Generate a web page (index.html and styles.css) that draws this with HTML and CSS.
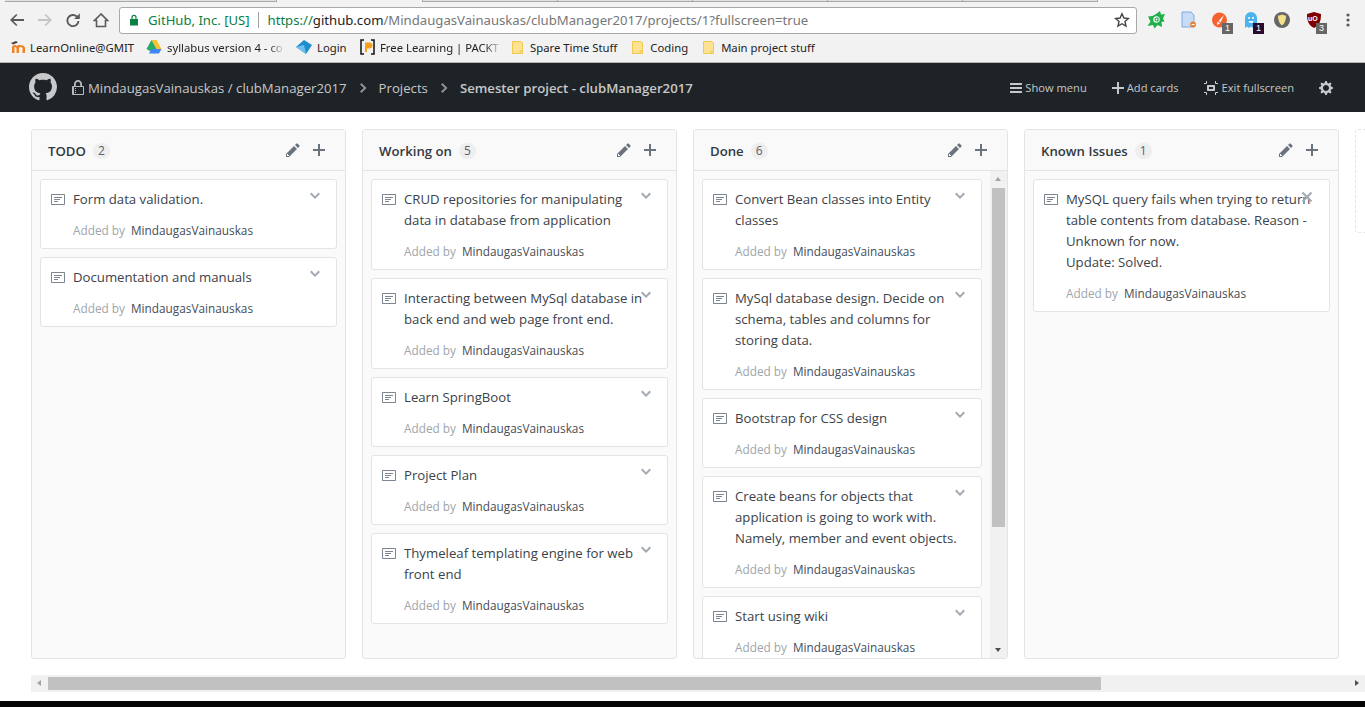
FILE: index.html
```html
<!DOCTYPE html>
<html lang="en">
<head>
  <meta charset="UTF-8" />
  <title>clubManager2017 project board</title>
  <link rel="stylesheet" href="styles.css">
</head>
<body>
  <svg class="defs" width="0" height="0">
    <symbol id="i-note" viewBox="0 0 14 16"><path d="M3 10h4V9H3v1zm0-2h6V7H3v1zm0-2h8V5H3v1zm10 6H1V3h12v9zM1 2c-.55 0-1 .45-1 1v9c0 .55.45 1 1 1h12c.55 0 1-.45 1-1V3c0-.55-.45-1-1-1H1z"/></symbol>
    <symbol id="i-chevron" viewBox="0 0 10 16"><path d="M5 11L0 6l1.5-1.5L5 8.25 8.5 4.5 10 6l-5 5z"/></symbol>
    <symbol id="i-pencil" viewBox="0 0 14 16"><path d="M0 12v3h3l8-8-3-3-8 8zm3 2H1v-2h1v1h1v1zm10.3-9.3L12 6 9 3l1.3-1.3a.996.996 0 0 1 1.41 0l1.59 1.59c.39.39.39 1.02 0 1.41z"/></symbol>
    <symbol id="i-plus" viewBox="0 0 12 16"><path d="M12 9H7v5H5V9H0V7h5V2h2v5h5v2z"/></symbol>
    <symbol id="i-right" viewBox="0 0 8 16"><path d="M7.5 8l-5 5L1 11.5 4.75 8 1 4.5 2.5 3l5 5z"/></symbol>
    <symbol id="i-folder" viewBox="0 0 11 13"><path d="M.5.5h8.500l1.500 1.500v10.500H.5z" fill="#fde293" stroke="#f0c94f"/><path d="M8 10h2.500v2.500H8z" fill="#fde293" stroke="#f0c94f"/></symbol>
  </svg>

  <div class="tabstrip">
    <span class="tab tab-first"></span>
    <span class="tab tab-active"></span>
    <span class="tab"></span>
    <span class="tab"></span>
    <span class="tab"></span>
    <span class="tab"></span>
    <span class="tab"></span>
  </div>

  <div class="toolbar">
    <svg class="nav-icon" viewBox="0 0 16 16"><path d="M15 7.100H4.400l4-4L7.200 1.900 1 8l6.200 6.100 1.200-1.200-4-4H15z" fill="#5a5a5a"/></svg>
    <svg class="nav-icon" viewBox="0 0 16 16"><path d="M1 7.100h10.600l-4-4 1.200-1.200L15 8l-6.200 6.100-1.200-1.200 4-4H1z" fill="#c4c4c4"/></svg>
    <svg class="nav-icon" viewBox="0 0 16 16"><path d="M13.500 9a5.600 5.600 0 1 1-1.700-4.500" fill="none" stroke="#5a5a5a" stroke-width="1.900"/><path d="M14.800 1.300v5.700H9.100z" fill="#5a5a5a"/></svg>
    <svg class="nav-icon" viewBox="0 0 16 16"><path d="M8 2L1.500 8.500h2v6h9v-6h2z" fill="none" stroke="#5a5a5a" stroke-width="1.600"/></svg>
    <div class="omnibox">
      <svg class="padlock" viewBox="0 0 10 12"><path d="M2.400 5V3.400a2.600 2.600 0 0 1 5.200 0V5H9v6.500H1V5zM3.600 5h2.800V3.400a1.400 1.400 0 0 0-2.800 0z" fill="#0b8043"/></svg>
      <span class="site">GitHub, Inc. [US]</span>
      <span class="omni-sep"></span>
      <span class="url"><span class="scheme">https://</span><span class="host">github.com</span>/MindaugasVainauskas/clubManager2017/projects/1?fullscreen=true</span>
      <svg class="star" viewBox="0 0 16 16"><path d="M8 1.800l1.900 4.200 4.500.5-3.400 3 1 4.500L8 11.700 4 14l1-4.500-3.400-3 4.500-.5z" fill="none" stroke="#444" stroke-width="1.400"/></svg>
    </div>
    <div class="extensions">
      <span class="ext ext-avast"><svg viewBox="0 0 18 18"><path d="M9 3l4-3 1 3.500 4-.5-2 4.500 1.500 3-3 .5.5 5-4.500-2-3 3.500-1.500-3.500-5.500 1 3-4.500L1 5.500l4.500-.5z" fill="#1fb04c"/><circle cx="9.500" cy="8.500" r="3.200" fill="#fff"/><path d="M8 8.500a1.500 1.500 0 0 1 3 0 1.500 1.500 0 0 1-3 0zM11 6.500v4" fill="none" stroke="#1fb04c" stroke-width="1.100"/></svg></span>
      <span class="ext ext-doc"><svg viewBox="0 0 18 18"><path d="M2 1h9l3 3v12H2z" fill="#c6dcf7" stroke="#7eaae0"/><circle cx="13" cy="13.500" r="3" fill="#e8853a"/><path d="M11.500 13h3v1h-3z" fill="#fff"/></svg></span>
      <span class="ext ext-brush"><svg viewBox="0 0 18 18"><circle cx="8.500" cy="9" r="7.500" fill="#f4622f"/><path d="M13 4L7.500 10l2 1.500z" fill="#fff"/><path d="M6.500 10.500l2.500 2-3 1.500z" fill="#fff"/></svg><b class="badge">1</b></span>
      <span class="ext ext-ghost"><svg viewBox="0 0 18 18"><path d="M3 17V7a6 6 0 0 1 12 0v10l-2-1.500-2 1.500-2-1.500-2 1.500-2-1.500z" fill="#4db3ec"/><circle cx="7" cy="7" r="1" fill="#fff"/><circle cx="11" cy="7" r="1" fill="#fff"/><path d="M6.500 10h5a2.500 2 0 0 1-5 0z" fill="#fff"/></svg><b class="badge badge-dark">1</b></span>
      <span class="ext ext-shield"><svg viewBox="0 0 18 18"><circle cx="9" cy="9" r="8" fill="#666"/><path d="M9 3.500c2 1 3 1 4 1 0 4-1 8-4 10-3-2-4-6-4-10 1 0 2 0 4-1z" fill="#f4e08a"/></svg></span>
      <span class="ext ext-ublock"><svg viewBox="0 0 18 18"><path d="M9 1l7 2c0 6-1 11-7 14C3 14 2 9 2 3z" fill="#800000"/></svg><i class="ub">uO</i><b class="badge">3</b></span>
      <svg class="kebab" viewBox="0 0 4 16"><circle cx="2" cy="3" r="1.600"/><circle cx="2" cy="8" r="1.600"/><circle cx="2" cy="13" r="1.600"/></svg>
    </div>
  </div>

  <div class="bookmarks">
    <a class="mark mark-moodle"><svg viewBox="0 0 16 14"><path d="M1 3l5-2 2 1.500-5 2z" fill="#444"/><path d="M2 13V7.500c0-1.500 1-2.500 2.500-2.500 1 0 1.700.4 2.200 1 .5-.6 1.300-1 2.300-1C13 5 15 6 15 8v5h-2.500V8.500c0-1-.8-1.500-2.500-1.500-.7 0-1 .5-1 1.500V13H6.500V8.500C6.500 7.500 5.500 7 4.800 7s-.3.500-.3 1.500V13z" fill="#f58220"/></svg>LearnOnline@GMIT</a>
    <a class="mark mark-drive"><svg viewBox="0 0 16 14"><path d="M5.500 0h5l5 9h-5z" fill="#fbc02d"/><path d="M5.500 0l5 9-2.500 4.500L.5 9z" fill="#1da462" opacity=".95"/><path d="M3 13.500L5.500 9h10L13 13.500z" fill="#4285f4"/></svg><span class="fade">syllabus version 4 - co</span></a>
    <a class="mark mark-login"><svg viewBox="0 0 16 14"><path d="M8 0l8 5-6 9-10-7z" fill="#1d8fd1"/><path d="M0 7l8-2 2 9z" fill="#6ec1ec"/></svg>Login</a>
    <a class="mark mark-packt"><svg viewBox="0 0 15 16"><path d="M4 1H1v14h3M11 1h3v14h-3" fill="none" stroke="#111" stroke-width="1.500"/><path d="M5 3.500h4.500a2.500 2.500 0 0 1 0 6H7V13H5z" fill="#f5a21b"/></svg><span class="fade">Free Learning | PACKT</span></a>
    <a class="mark mark-folder"><svg><use href="#i-folder"/></svg>Spare Time Stuff</a>
    <a class="mark mark-folder"><svg><use href="#i-folder"/></svg>Coding</a>
    <a class="mark mark-folder"><svg><use href="#i-folder"/></svg>Main project stuff</a>
  </div>

  <header class="gh-bar">
    <svg class="gh-logo" viewBox="0 0 16 16"><path d="M8 0C3.580 0 0 3.580 0 8c0 3.540 2.290 6.530 5.470 7.590.4.070.55-.17.55-.38 0-.19-.01-.82-.01-1.490-2.010.37-2.530-.49-2.690-.94-.09-.23-.48-.94-.82-1.130-.28-.15-.68-.52-.01-.53.63-.01 1.080.58 1.230.82.720 1.210 1.870.87 2.330.66.070-.52.28-.87.51-1.070-1.780-.2-3.640-.89-3.640-3.950 0-.87.31-1.590.82-2.150-.08-.2-.36-1.020.08-2.120 0 0 .67-.21 2.200.82.64-.18 1.320-.27 2-.27.68 0 1.360.09 2 .27 1.530-1.040 2.200-.82 2.200-.82.44 1.100.16 1.920.08 2.120.51.56.82 1.270.82 2.150 0 3.070-1.870 3.750-3.650 3.950.29.25.54.73.54 1.480 0 1.070-.01 1.930-.01 2.200 0 .21.15.46.55.38A8.013 8.013 0 0 0 16 8c0-4.420-3.580-8-8-8z"/></svg>
    <svg class="gh-lock" viewBox="0 0 12 16"><path d="M4 13H3v-1h1v1zm8-6v7c0 .55-.45 1-1 1H1c-.55 0-1-.45-1-1V7c0-.55.45-1 1-1h1V4c0-2.200 1.800-4 4-4s4 1.800 4 4v2h1c.55 0 1 .45 1 1zM3.800 6h4.410V4c0-1.220-.98-2.200-2.200-2.200-1.220 0-2.200.98-2.200 2.200v2H3.800zM11 7H2v7h9V7zM4 8H3v1h1V8zm0 2H3v1h1v-1z"/></svg>
    <span class="crumb crumb-repo">MindaugasVainauskas / clubManager2017</span>
    <svg class="crumb-sep"><use href="#i-right"/></svg>
    <span class="crumb crumb-projects">Projects</span>
    <svg class="crumb-sep"><use href="#i-right"/></svg>
    <strong class="crumb crumb-current">Semester project - clubManager2017</strong>
    <nav class="gh-actions">
      <a class="gh-action action-menu"><svg viewBox="0 0 12 16"><path d="M11.410 9H.59C0 9 0 8.590 0 8c0-.59 0-1 .59-1H11.400c.59 0 .59.41.59 1 0 .59 0 1-.59 1h.01zm0-4H.59C0 5 0 4.590 0 4c0-.59 0-1 .59-1H11.400c.59 0 .59.41.59 1 0 .59 0 1-.59 1h.01zM.59 11H11.400c.59 0 .59.41.59 1 0 .59 0 1-.59 1H.59C0 13 0 12.590 0 12c0-.59 0-1 .59-1z"/></svg>Show menu</a>
      <a class="gh-action action-add"><svg viewBox="0 0 12 16"><use href="#i-plus"/></svg>Add cards</a>
      <a class="gh-action action-exit"><svg viewBox="0 0 14 16"><path d="M2 4H0V3h2V1h1v2c0 .547-.453 1-1 1zm0 8H0v1h2v2h1v-2c0-.547-.453-1-1-1zm9-2c0 .547-.453 1-1 1H4c-.547 0-1-.453-1-1V6c0-.547.453-1 1-1h6c.547 0 1 .453 1 1v4zM9 7H5v2h4V7zm2 6v2h1v-2h2v-1h-2c-.547 0-1 .453-1 1zm1-9V1h-1v2c0 .547.453 1 1 1h2V3h-2z"/></svg>Exit fullscreen</a>
      <svg class="gh-gear" viewBox="0 0 14 16"><path d="M14 8.770v-1.600l-1.940-.64-.45-1.090.88-1.840-1.130-1.130-1.810.91-1.090-.45-.69-1.920h-1.600l-.63 1.940-1.110.45-1.840-.88-1.130 1.130.91 1.810-.45 1.090L0 7.230v1.590l1.940.64.45 1.090-.88 1.840 1.130 1.130 1.810-.91 1.090.45.69 1.920h1.590l.63-1.940 1.110-.45 1.840.88 1.130-1.130-.92-1.810.47-1.090L14 8.750v.02zM7 11c-1.660 0-3-1.340-3-3s1.340-3 3-3 3 1.340 3 3-1.340 3-3 3z"/></svg>
    </nav>
  </header>

  <main class="board">
    <section class="column">
      <div class="column-head">
        <span class="column-name">TODO</span><span class="counter">2</span>
        <svg class="head-pencil"><use href="#i-pencil"/></svg><svg class="head-plus"><use href="#i-plus"/></svg>
      </div>
      <div class="cards">
        <article class="card"><svg class="card-note"><use href="#i-note"/></svg><svg class="card-toggle"><use href="#i-chevron"/></svg>
          <p class="card-title">Form data validation.</p><p class="card-by">Added by <span>MindaugasVainauskas</span></p></article>
        <article class="card"><svg class="card-note"><use href="#i-note"/></svg><svg class="card-toggle"><use href="#i-chevron"/></svg>
          <p class="card-title">Documentation and manuals</p><p class="card-by">Added by <span>MindaugasVainauskas</span></p></article>
      </div>
    </section>

    <section class="column">
      <div class="column-head">
        <span class="column-name">Working on</span><span class="counter">5</span>
        <svg class="head-pencil"><use href="#i-pencil"/></svg><svg class="head-plus"><use href="#i-plus"/></svg>
      </div>
      <div class="cards">
        <article class="card"><svg class="card-note"><use href="#i-note"/></svg><svg class="card-toggle"><use href="#i-chevron"/></svg>
          <p class="card-title">CRUD repositories for manipulating<br>data in database from application</p><p class="card-by">Added by <span>MindaugasVainauskas</span></p></article>
        <article class="card"><svg class="card-note"><use href="#i-note"/></svg><svg class="card-toggle"><use href="#i-chevron"/></svg>
          <p class="card-title">Interacting between MySql database in<br>back end and web page front end.</p><p class="card-by">Added by <span>MindaugasVainauskas</span></p></article>
        <article class="card"><svg class="card-note"><use href="#i-note"/></svg><svg class="card-toggle"><use href="#i-chevron"/></svg>
          <p class="card-title">Learn SpringBoot</p><p class="card-by">Added by <span>MindaugasVainauskas</span></p></article>
        <article class="card"><svg class="card-note"><use href="#i-note"/></svg><svg class="card-toggle"><use href="#i-chevron"/></svg>
          <p class="card-title">Project Plan</p><p class="card-by">Added by <span>MindaugasVainauskas</span></p></article>
        <article class="card"><svg class="card-note"><use href="#i-note"/></svg><svg class="card-toggle"><use href="#i-chevron"/></svg>
          <p class="card-title">Thymeleaf templating engine for web<br>front end</p><p class="card-by">Added by <span>MindaugasVainauskas</span></p></article>
      </div>
    </section>

    <section class="column">
      <div class="column-head">
        <span class="column-name">Done</span><span class="counter">6</span>
        <svg class="head-pencil"><use href="#i-pencil"/></svg><svg class="head-plus"><use href="#i-plus"/></svg>
      </div>
      <div class="cards-scroll">
        <div class="cards">
          <article class="card"><svg class="card-note"><use href="#i-note"/></svg><svg class="card-toggle"><use href="#i-chevron"/></svg>
            <p class="card-title">Convert Bean classes into Entity<br>classes</p><p class="card-by">Added by <span>MindaugasVainauskas</span></p></article>
          <article class="card"><svg class="card-note"><use href="#i-note"/></svg><svg class="card-toggle"><use href="#i-chevron"/></svg>
            <p class="card-title">MySql database design. Decide on<br>schema, tables and columns for<br>storing data.</p><p class="card-by">Added by <span>MindaugasVainauskas</span></p></article>
          <article class="card"><svg class="card-note"><use href="#i-note"/></svg><svg class="card-toggle"><use href="#i-chevron"/></svg>
            <p class="card-title">Bootstrap for CSS design</p><p class="card-by">Added by <span>MindaugasVainauskas</span></p></article>
          <article class="card"><svg class="card-note"><use href="#i-note"/></svg><svg class="card-toggle"><use href="#i-chevron"/></svg>
            <p class="card-title">Create beans for objects that<br>application is going to work with.<br>Namely, member and event objects.</p><p class="card-by">Added by <span>MindaugasVainauskas</span></p></article>
          <article class="card"><svg class="card-note"><use href="#i-note"/></svg><svg class="card-toggle"><use href="#i-chevron"/></svg>
            <p class="card-title">Start using wiki</p><p class="card-by">Added by <span>MindaugasVainauskas</span></p></article>
        </div>
        <div class="vscroll">
          <span class="arrow-up"></span>
          <span class="vthumb"></span>
          <span class="arrow-down"></span>
        </div>
      </div>
    </section>

    <section class="column">
      <div class="column-head">
        <span class="column-name">Known Issues</span><span class="counter">1</span>
        <svg class="head-pencil"><use href="#i-pencil"/></svg><svg class="head-plus"><use href="#i-plus"/></svg>
      </div>
      <div class="cards">
        <article class="card"><svg class="card-note"><use href="#i-note"/></svg>
          <svg class="card-close" viewBox="0 0 12 16"><path d="M7.480 8l3.750 3.750-1.480 1.480L6 9.480l-3.750 3.750-1.480-1.480L4.520 8 .77 4.250l1.480-1.480L6 6.520l3.750-3.750 1.480 1.480L7.480 8z"/></svg>
          <p class="card-title">MySQL query fails when trying to return<br>table contents from database. Reason -<br>Unknown for now.<br>Update: Solved.</p><p class="card-by">Added by <span>MindaugasVainauskas</span></p></article>
      </div>
    </section>

    <div class="ghost-column"></div>
  </main>

  <div class="hscroll">
    <span class="arrow-left"></span>
    <span class="hthumb"></span>
    <span class="arrow-right"></span>
  </div>
  <div class="desktop"></div>
</body>
</html>
```

FILE: styles.css
```css
* {
  box-sizing: border-box;
}

html, body {
  margin: 0;
  height: 707px;
  overflow: hidden;
}

body {
  display: flex;
  flex-direction: column;
  background: #fff;
  font-family: "Open Sans", "Liberation Sans", sans-serif;
  font-size: 13px;
  color: #24292e;
}

.defs {
  position: absolute;
}

/* browser chrome */
.tabstrip {
  height: 6px;
  background: #f2f2f2;
  flex: none;
  display: flex;
  padding-left: 5px;
}

.tab {
  width: 135px;
  height: 2px;
  background: #e2e2e2;
  border-bottom: 1px solid #a8a8a8;
  border-right: 1px solid #a8a8a8;
}

.tab-first {
  width: 272px;
}

.tab-active {
  width: 146px;
  background: #f2f2f2;
  border-bottom: 0;
}

.toolbar {
  height: 28px;
  flex: none;
  display: flex;
  align-items: center;
  background: #f2f2f2;
  padding-left: 9px;
}

.nav-icon {
  width: 16px;
  height: 16px;
  margin-right: 12px;
  flex: none;
}

.omnibox {
  width: 1018px;
  height: 27px;
  margin-left: -2px;
  flex: none;
  display: flex;
  align-items: center;
  background: #fff;
  border: 1px solid #a9a9a9;
  border-radius: 3px;
  font-family: "Noto Sans", sans-serif;
  font-size: 13.1px;
  padding-left: 9px;
}

.padlock {
  width: 10px;
  height: 12px;
  margin-right: 9px;
}

.site {
  color: #0b8043;
}

.omni-sep {
  width: 1px;
  height: 16px;
  background: #a0a0a0;
  margin: 0 9px 0 8px;
}

.url {
  color: #777;
  font-size: 13.15px;
}

.scheme {
  color: #0b8043;
}

.host {
  color: #222;
}

.star {
  width: 16px;
  height: 16px;
  margin-left: auto;
  margin-right: 6px;
}

.extensions {
  display: flex;
  align-items: center;
  flex: 1;
  height: 26px;
}

.ext {
  position: relative;
  width: 18px;
  height: 18px;
  flex: none;
}

.ext svg {
  display: block;
  width: 18px;
  height: 18px;
}

.ext-avast { margin-left: 10px; }
.ext-doc { margin-left: 15px; }
.ext-brush { margin-left: 13px; }
.ext-ghost { margin-left: 13px; }
.ext-shield { margin-left: 13px; }
.ext-ublock { margin-left: 14px; }

.badge {
  position: absolute;
  left: 11px;
  top: 12px;
  width: 11px;
  height: 11px;
  background: #666;
  color: #fff;
  font: 9px/11px "Liberation Sans", sans-serif;
  text-align: center;
}

.badge-dark {
  background: #2a0a2e;
}

.ub {
  position: absolute;
  left: 3px;
  top: 3px;
  font: bold 7px/9px "Liberation Sans", sans-serif;
  color: #fff;
}

.kebab {
  width: 4px;
  height: 16px;
  margin-left: 23px;
  fill: #5a5a5a;
}

.bookmarks {
  height: 29px;
  flex: none;
  display: flex;
  align-items: center;
  background: #f2f2f2;
  font-family: "Noto Sans", sans-serif;
  font-size: 11.3px;
  color: #222;
  padding: 0 0 2px 10px;
  border-bottom: 1px solid #b5b5b5;
}

.mark {
  display: flex;
  align-items: center;
  white-space: nowrap;
  flex: none;
}

.mark svg {
  width: 16px;
  height: 14px;
  margin-right: 4px;
  flex: none;
}

.fade {
  display: block;
  -webkit-mask-image: linear-gradient(to right, #000 88%, rgba(0, 0, 0, 0.15));
  mask-image: linear-gradient(to right, #000 88%, rgba(0, 0, 0, 0.15));
}

.mark-moodle { width: 136px; }
.mark-drive { width: 150px; }
.mark-drive svg { margin-right: 5px; }
.mark-login { width: 64px; }
.mark-login svg { margin-right: 5px; }
.mark-packt { width: 152px; }
.mark-packt svg { width: 15px; height: 16px; margin-right: 5px; }
.mark-folder { margin-right: 15px; }
.mark-folder svg { width: 11px; height: 13px; margin-right: 7px; }

/* project header */
.gh-bar {
  height: 49px;
  flex: none;
  display: flex;
  align-items: center;
  background: #1e2327;
  color: rgba(255, 255, 255, 0.75);
  font-size: 13.2px;
  padding: 1px 0 0 29px;
}

.gh-logo {
  width: 28px;
  height: 28px;
  fill: #c8c9ca;
  margin: 0 15px 3px 0;
  flex: none;
}

.gh-lock {
  width: 12px;
  height: 16px;
  fill: #b9babb;
  margin-right: 4px;
  flex: none;
}

.crumb {
  white-space: nowrap;
}

.crumb-sep {
  width: 8px;
  height: 16px;
  fill: #8f9193;
  margin: 0 12px;
  flex: none;
}

.crumb-current {
  font-weight: 600;
}

.gh-actions {
  margin: 0 0 1px auto;
  display: flex;
  align-items: center;
  font-size: 11.15px;
  padding-right: 32px;
}

.gh-action {
  display: flex;
  align-items: center;
  white-space: nowrap;
  margin-right: 25px;
}

.gh-action svg {
  width: 12px;
  height: 16px;
  fill: #c8c9ca;
  margin-right: 3px;
}

.action-exit svg {
  width: 14px;
  margin-right: 4px;
}

.gh-gear {
  width: 14px;
  height: 16px;
  fill: #c8c9ca;
}

/* board */
.board {
  flex: 1;
  min-height: 0;
  display: flex;
  gap: 16px;
  padding: 17px 0 16px 31px;
  overflow: hidden;
}

.column {
  width: 315px;
  flex: none;
  display: flex;
  flex-direction: column;
  background: #fafafa;
  border: 1px solid #e4e4e4;
  border-radius: 3px;
  overflow: hidden;
}

.column-head {
  height: 41px;
  flex: none;
  display: flex;
  align-items: center;
  background: #f9f9f9;
  border-bottom: 1px solid #e4e4e4;
  padding: 0 20px 0 16px;
}

.column-name {
  font-size: 13.2px;
  font-weight: 600;
  color: #33393f;
  margin-top: 2px;
}

.counter {
  min-width: 16px;
  height: 16px;
  margin: 2px 0 0 7px;
  padding: 0 5px;
  border-radius: 8px;
  background: #eeeeee;
  color: #586069;
  font-size: 12px;
  line-height: 16px;
  text-align: center;
}

.head-pencil {
  width: 14px;
  height: 16px;
  fill: #6a737d;
  margin-left: auto;
  margin-right: 13px;
}

.head-plus {
  width: 12px;
  height: 16px;
  fill: #6a737d;
}

.cards {
  flex: 1;
  min-width: 0;
  display: flex;
  flex-direction: column;
  gap: 8px;
  padding: 8px;
}

.cards-scroll {
  flex: 1;
  min-height: 0;
  display: flex;
  overflow: hidden;
}

.card {
  position: relative;
  flex: none;
  background: #fff;
  border: 1px solid #e4e4e4;
  border-radius: 3px;
  padding: 9px 10px 7px 32px;
}

.card p {
  margin: 0;
  line-height: 21px;
  white-space: nowrap;
}

.card-title {
  color: #3b4249;
  font-size: 13.2px;
}

.card p.card-by {
  margin-top: 10px;
  font-size: 11.8px;
  color: #a0a5aa;
}

.card-by span {
  color: #444d56;
  margin-left: 3px;
}

.card-note {
  position: absolute;
  left: 10px;
  top: 12px;
  width: 14px;
  height: 16px;
  fill: #7d8690;
}

.card-toggle {
  position: absolute;
  right: 16px;
  top: 8px;
  width: 10px;
  height: 16px;
  fill: #a3aab1;
}

.card-close {
  position: absolute;
  right: 16px;
  top: 9px;
  width: 12px;
  height: 16px;
  fill: #a3aab1;
}

.vscroll {
  width: 17px;
  flex: none;
  background: #f1f1f1;
  position: relative;
}

.vthumb {
  position: absolute;
  top: 17px;
  left: 2px;
  width: 13px;
  height: 339px;
  background: #c1c1c1;
}

.arrow-up, .arrow-down {
  position: absolute;
  left: 5px;
  width: 0;
  height: 0;
  border-left: 3.5px solid transparent;
  border-right: 3.5px solid transparent;
}

.arrow-up {
  top: 6px;
  border-bottom: 4px solid #a3a3a3;
}

.arrow-down {
  bottom: 6px;
  border-top: 4px solid #505050;
}

.ghost-column {
  width: 315px;
  height: 104px;
  flex: none;
  border: 1px dashed #e4e4e4;
  border-radius: 3px;
}

/* window scrollbar and the desktop under it */
.hscroll {
  height: 17px;
  flex: none;
  margin-left: 31px;
  background: #f1f1f1;
  position: relative;
}

.hthumb {
  position: absolute;
  left: 17px;
  top: 2px;
  width: 1053px;
  height: 13px;
  background: #c1c1c1;
}

.arrow-left, .arrow-right {
  position: absolute;
  top: 5px;
  width: 0;
  height: 0;
  border-top: 3.5px solid transparent;
  border-bottom: 3.5px solid transparent;
}

.arrow-left {
  left: 6px;
  border-right: 4px solid #a3a3a3;
}

.arrow-right {
  right: 6px;
  border-left: 4px solid #505050;
}

.desktop {
  height: 6px;
  margin-top: 9px;
  flex: none;
  background: #050505;
}
```
